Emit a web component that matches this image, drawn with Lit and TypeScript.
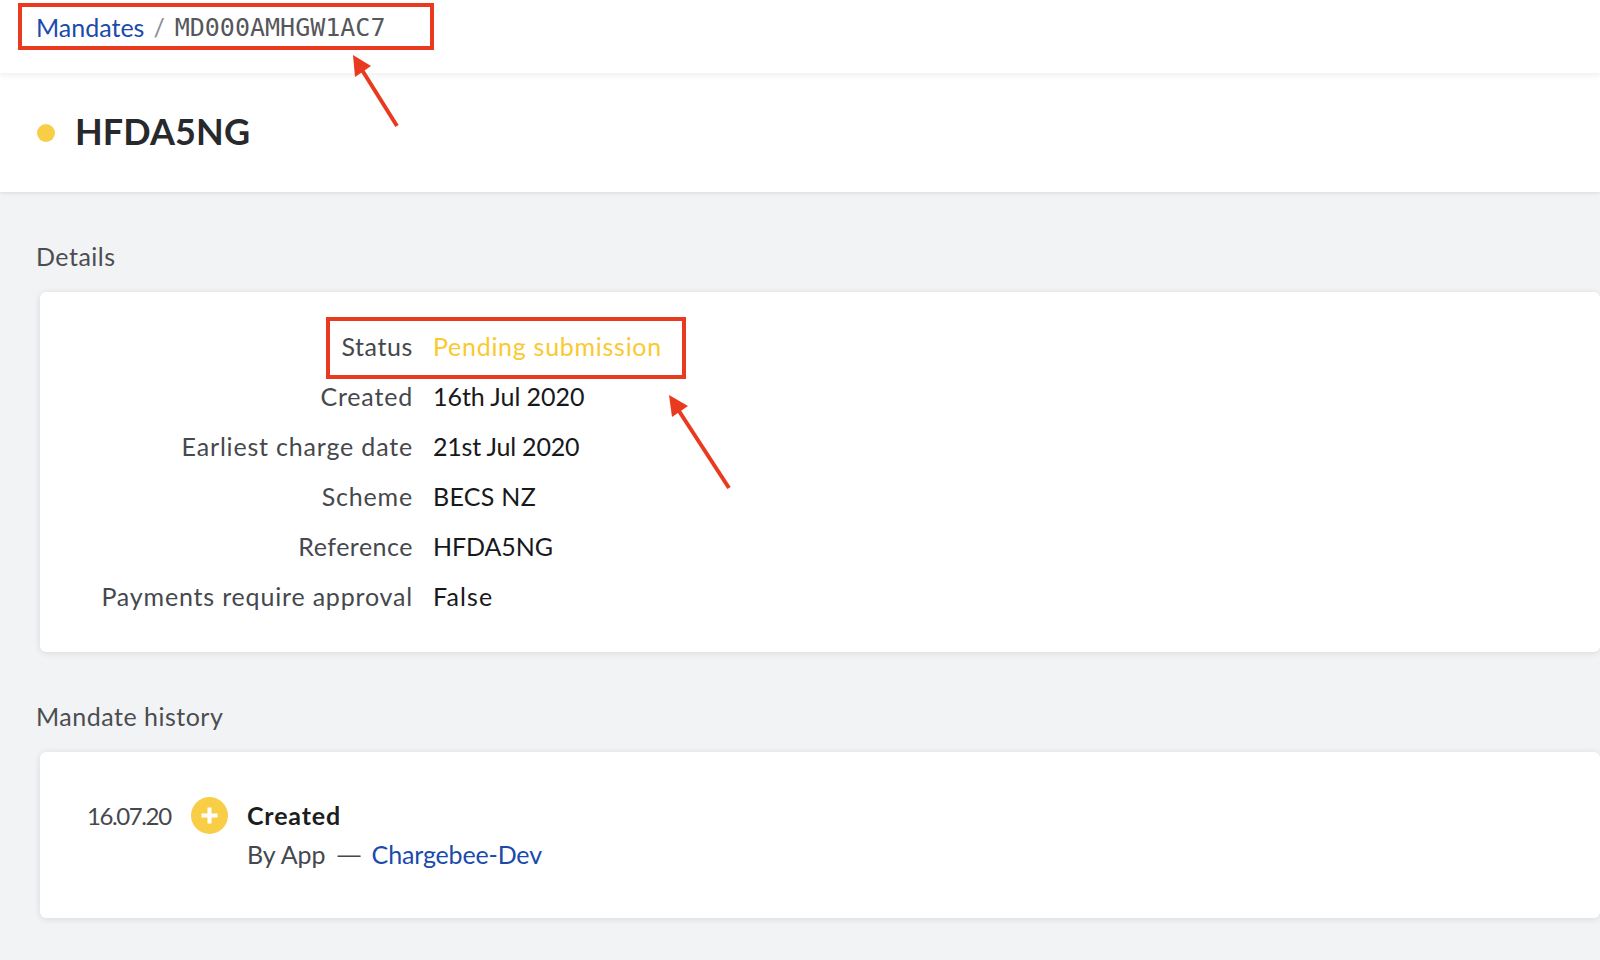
import { LitElement, html, css, svg } from "lit";
import { customElement } from "lit/decorators.js";

const ROWS: [string, string, string, string][] = [
  ["Status", "Pending submission", "pending", "first"],
  ["Created", "16th Jul 2020", "num", ""],
  ["Earliest charge date", "21st Jul 2020", "num tight", ""],
  ["Scheme", "BECS NZ", "", ""],
  ["Reference", "HFDA5NG", "ref", "short"],
  ["Payments require approval", "False", "wide", ""],
];

@customElement("app-root")
export class AppRoot extends LitElement {
  static styles = css`
    :host {
      display: block;
      position: relative;
      width: 1600px;
      height: 960px;
      overflow: hidden;
      background: #f2f3f5;
      font-family: "Lato", "Open Sans", sans-serif;
      font-size: 25px;
      color: #45484d;
    }
    a { color: #1a4bab; text-decoration: none; }
    .crumbs {
      height: 73px;
      box-sizing: border-box;
      background: #fff;
      padding: 0 0 19px 36px;
      display: flex;
      align-items: center;
      box-shadow: 0 2px 6px rgba(30, 35, 45, 0.08);
      position: relative;
      z-index: 1;
    }
    .crumbs .sep { color: #8b8e93; margin: 0 10px 0 9px; }
    .crumbs .id {
      font-family: "DejaVu Sans Mono", monospace;
      font-size: 25px;
      color: #55575b;
    }
    .title {
      height: 119px;
      box-sizing: border-box;
      background: #fff;
      padding: 0 37px 3px;
      display: flex;
      align-items: center;
      gap: 20px;
      box-shadow: 0 1px 4px rgba(30, 35, 45, 0.12);
      position: relative;
    }
    .dot { width: 18px; height: 18px; border-radius: 50%; background: #f8ce46; margin-top: 3px; }
    h1 { margin: 0; font-size: 36px; font-weight: 700; color: #27292c; letter-spacing: 0.1px; }
    main { padding: 48px 0 0 36px; }
    h2 { margin: 0; font-size: 25px; font-weight: 400; color: #4b4d52; line-height: 32px; letter-spacing: 0.5px; }
    .card {
      margin: 20px 0 0 4px;
      background: #fff;
      border-radius: 6px;
      box-shadow: 0 1px 6px rgba(30, 35, 45, 0.12);
    }
    .details { height: 360px; box-sizing: border-box; padding: 29px 0 0 0; margin-bottom: 48px; }
    .row { display: grid; grid-template-columns: 373px 1fr; column-gap: 20px; height: 50px; align-items: center; }
    .row .k { text-align: right; letter-spacing: 0.82px; }
    .row .k.first { letter-spacing: 0.6px; }
    .row .k.short { letter-spacing: 0.5px; }
    .row .v { color: #17191c; letter-spacing: 0.28px; }
    .row .v.pending { color: #fac92f; letter-spacing: 0.72px; }
    .row .v.num { letter-spacing: -0.05px; }
    .row .v.tight { letter-spacing: -0.2px; }
    .row .v.ref { letter-spacing: -0.1px; }
    .row .v.wide { letter-spacing: 1.1px; }
    .history {
      height: 166px;
      box-sizing: border-box;
      padding: 44px 0 0 47px;
      display: flex;
      align-items: flex-start;
    }
    .date { width: 104px; line-height: 40px; font-size: 24px; letter-spacing: -1.4px; }
    .badge { width: 37px; height: 37px; flex: none; margin-top: 1px; }
    .entry { margin-left: 19px; }
    .entry b { display: block; font-weight: 700; color: #1b1d20; line-height: 38px; letter-spacing: 0.85px; }
    .entry .by { line-height: 40px; display: flex; letter-spacing: 0; }
    .entry .by a { letter-spacing: -0.15px; }
    .entry .dash { margin: 0 11px 0 12px; font-family: "Liberation Sans", sans-serif; font-size: 23px; }
    .marks { position: absolute; inset: 0; pointer-events: none; z-index: 2; }
    .box { position: absolute; box-sizing: border-box; border: 4px solid #e9391f; }
    .box1 { left: 18px; top: 3px; width: 416px; height: 47px; }
    .box2 { left: 326px; top: 317px; width: 360px; height: 62px; }
    .marks svg { position: absolute; left: 0; top: 0; }
  `;

  render() {
    return html`
      <div class="crumbs">
        <a href="#">Mandates</a><span class="sep">/</span><span class="id">MD000AMHGW1AC7</span>
      </div>
      <div class="title"><span class="dot"></span><h1>HFDA5NG</h1></div>
      <main>
        <h2>Details</h2>
        <section class="card details">
          ${ROWS.map(
            ([k, v, c, kc]) => html`<div class="row"><span class="k ${kc}">${k}</span><span class="v ${c}">${v}</span></div>`
          )}
        </section>
        <h2>Mandate history</h2>
        <section class="card history">
          <span class="date">16.07.20</span>
          <svg class="badge" viewBox="0 0 37 37">
            <circle cx="18.5" cy="18.5" r="18.5" fill="#f8ce46"></circle>
            <path d="M18.5 10.5v16M10.5 18.5h16" stroke="#fff" stroke-width="4" fill="none"></path>
          </svg>
          <div class="entry">
            <b>Created</b>
            <div class="by"><span>By App</span><span class="dash">—</span><a href="#">Chargebee-Dev</a></div>
          </div>
        </section>
      </main>
      <div class="marks">
        <div class="box box1"></div>
        <div class="box box2"></div>
        <svg width="1600" height="960" viewBox="0 0 1600 960">
          ${svg`
            <path d="M397 126L362 70" stroke="#e9391f" stroke-width="4" fill="none"></path>
            <path d="M353 55L371 66L355 77Z" fill="#e9391f"></path>
            <path d="M729 488L679 411" stroke="#e9391f" stroke-width="4" fill="none"></path>
            <path d="M669 395L688 406L672 417Z" fill="#e9391f"></path>
          `}
        </svg>
      </div>
    `;
  }
}
